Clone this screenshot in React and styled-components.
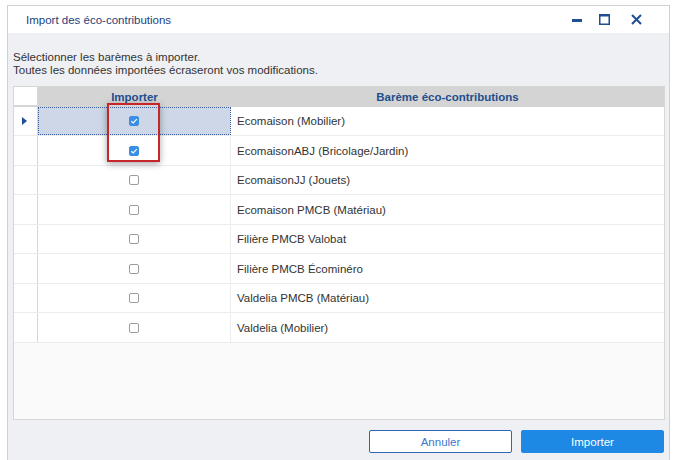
import React from 'react'
import styled, { createGlobalStyle } from 'styled-components'

const GlobalStyle = createGlobalStyle`
  html, body {
    margin: 0;
    padding: 0;
    background: #ffffff;
    font-family: "Liberation Sans", Arial, sans-serif;
  }
`

const Window = styled.div`
  margin: 5px 0 0 7px;
  width: 661px;
  height: 455px;
  border: 1px solid #d0d0d0;
  border-bottom: none;
  display: flex;
  flex-direction: column;
  background: #eff0f4;
  font-size: 11.5px;
  color: #333;
`

const TitleBar = styled.div`
  height: 27px;
  background: #fff;
  display: flex;
  align-items: center;
  padding-left: 18px;
  padding-right: 27px;
  color: #1d3f7c;
  font-size: 11.5px;
`

const Title = styled.div`
  flex: 1;
`

const Controls = styled.div`
  display: flex;
  align-items: center;
`

const CtrlBtn = styled.div`
  width: 11px;
  height: 11px;
  margin-left: ${p => p.gap || 0}px;
  display: flex;
  align-items: center;
  justify-content: center;
  color: #1f4e94;
`

const Body = styled.div`
  flex: 1;
  padding: 18px 4px 0 5px;
  display: flex;
  flex-direction: column;
`

const Intro = styled.div`
  line-height: 13px;
  color: #333;
`

const Grid = styled.div`
  position: relative;
  margin-top: 9px;
  height: 332px;
  border: 1px solid #d6d6d6;
  background: #fafafa;
`

const Row = styled.div`
  display: grid;
  grid-template-columns: 24px 193px 1fr;
  height: ${p => p.h}px;
  background: ${p => (p.header ? '#d4d4d4' : '#fff')};
  border-bottom: 1px solid ${p => (p.header ? '#d4d4d4' : '#ececec')};
  box-sizing: border-box;
`

const Indicator = styled.div`
  background: #fff;
  border-right: 1px solid #d6d6d6;
  border-bottom: ${p => (p.header ? '1px solid #d6d6d6' : 'none')};
  display: flex;
  align-items: center;
  justify-content: center;
  padding-right: 2px;
`

const HeadCell = styled.div`
  display: flex;
  align-items: center;
  justify-content: center;
  font-weight: bold;
  color: #1f4e8c;
`

const CheckCell = styled.div`
  display: flex;
  align-items: center;
  justify-content: center;
  border-right: 1px solid #ececec;
  background: ${p => (p.selected ? '#cdd7e7' : '#fff')};
  outline: ${p => (p.selected ? '1px dotted #3a5fa0' : 'none')};
  outline-offset: -1px;
`

const TextCell = styled.div`
  display: flex;
  align-items: center;
  padding-left: 6px;
  color: #333;
`

const Box = styled.div`
  width: 10px;
  height: 10px;
  box-sizing: border-box;
  border-radius: 2px;
  background: ${p => (p.checked ? '#3a8ee6' : '#fff')};
  border: 1px solid ${p => (p.checked ? '#3a8ee6' : '#9c9c9c')};
  display: flex;
  align-items: center;
  justify-content: center;
`

const Highlight = styled.div`
  position: absolute;
  left: 93px;
  top: 16px;
  width: 53px;
  height: 59px;
  box-sizing: border-box;
  border: 2px solid #c6252c;
  box-shadow: 0 2px 7px rgba(0, 0, 0, 0.35);
  pointer-events: none;
`

const Footer = styled.div`
  display: flex;
  justify-content: flex-end;
  gap: 9px;
  margin-top: 10px;
  padding-right: 1px;
`

const Button = styled.div`
  width: 143px;
  height: 23px;
  box-sizing: border-box;
  border-radius: 2px;
  display: flex;
  align-items: center;
  justify-content: center;
  font-size: 11.5px;
  background: ${p => (p.primary ? '#1e88e5' : '#fff')};
  color: ${p => (p.primary ? '#fff' : '#3b78cf')};
  border: 1px solid ${p => (p.primary ? '#1e88e5' : '#2f65b8')};
`

const Check = () => (
  <svg width="8" height="8" viewBox="0 0 8 8">
    <path d="M1.3 4.2 L3.2 5.9 L6.8 2.2" stroke="#fff" strokeWidth="1.2" fill="none" />
  </svg>
)

const rows = [
  { label: 'Ecomaison (Mobilier)', checked: true, h: 29 },
  { label: 'EcomaisonABJ (Bricolage/Jardin)', checked: true, h: 30 },
  { label: 'EcomaisonJJ (Jouets)', checked: false, h: 29 },
  { label: 'Ecomaison PMCB (Matériau)', checked: false, h: 30 },
  { label: 'Filière PMCB Valobat', checked: false, h: 29 },
  { label: 'Filière PMCB Écominéro', checked: false, h: 30 },
  { label: 'Valdelia PMCB (Matériau)', checked: false, h: 29 },
  { label: 'Valdelia (Mobilier)', checked: false, h: 30 },
]

const App = () => (
  <>
    <GlobalStyle />
    <Window>
      <TitleBar>
        <Title>Import des éco-contributions</Title>
        <Controls>
          <CtrlBtn>
            <svg width="10" height="10" viewBox="0 0 10 10">
              <rect x="0" y="4" width="10" height="3" fill="currentColor" />
            </svg>
          </CtrlBtn>
          <CtrlBtn gap={17}>
            <svg width="11" height="11" viewBox="0 0 11 11">
              <rect x="0.75" y="0.75" width="9.5" height="9.5" fill="none" stroke="currentColor" strokeWidth="1.5" />
              <rect x="0" y="0" width="11" height="2.5" fill="currentColor" />
            </svg>
          </CtrlBtn>
          <CtrlBtn gap={21}>
            <svg width="11" height="11" viewBox="0 0 11 11">
              <path d="M1 1 L10 10 M10 1 L1 10" stroke="currentColor" strokeWidth="2" />
            </svg>
          </CtrlBtn>
        </Controls>
      </TitleBar>
      <Body>
        <Intro>
          Sélectionner les barèmes à importer.
          <br />
          Toutes les données importées écraseront vos modifications.
        </Intro>
        <Grid>
          <Row header h={20}>
            <Indicator header />
            <HeadCell>Importer</HeadCell>
            <HeadCell>Barème éco-contributions</HeadCell>
          </Row>
          {rows.map((r, i) => (
            <Row key={r.label} h={r.h}>
              <Indicator>
                {i === 0 ? (
                  <svg width="5" height="8" viewBox="0 0 5 8">
                    <path d="M0 0 L5 4 L0 8 Z" fill="#1f4e94" />
                  </svg>
                ) : null}
              </Indicator>
              <CheckCell selected={i === 0}>
                <Box checked={r.checked}>{r.checked ? <Check /> : null}</Box>
              </CheckCell>
              <TextCell>{r.label}</TextCell>
            </Row>
          ))}
          <Highlight />
        </Grid>
        <Footer>
          <Button>Annuler</Button>
          <Button primary>Importer</Button>
        </Footer>
      </Body>
    </Window>
  </>
)

export default App
